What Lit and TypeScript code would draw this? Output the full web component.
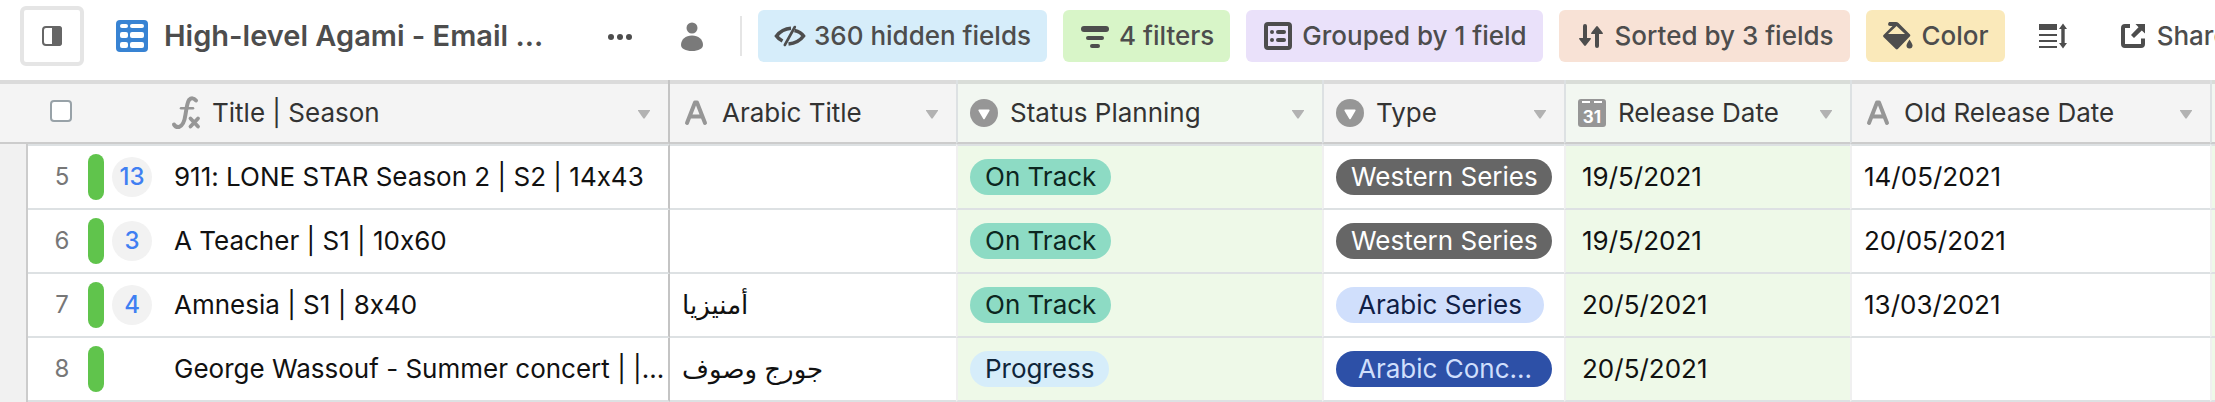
import { LitElement, html, css, svg, nothing, TemplateResult } from "lit";
import { customElement, property } from "lit/decorators.js";
import { classMap } from "lit/directives/class-map.js";

const icons: Record<string, TemplateResult> = {
  sidebar: svg`<rect x="7" y="7" width="18" height="18" rx="3" fill="#fff" stroke="currentColor" stroke-width="2"/><path d="M16 6h7a3 3 0 0 1 3 3v14a3 3 0 0 1-3 3h-7z" fill="currentColor"/>`,
  grid: svg`<rect width="32" height="32" rx="4" fill="#3883d3"/><g fill="#fff"><rect x="4" y="4" width="8" height="4" rx="2"/><rect x="14" y="4" width="14" height="4" rx="2"/><rect x="4" y="12" width="8" height="6" rx="2"/><rect x="14" y="12" width="14" height="6" rx="2"/><rect x="4" y="22" width="8" height="6" rx="2"/><rect x="14" y="22" width="14" height="6" rx="2"/></g>`,
  dots: svg`<g fill="currentColor"><circle cx="7" cy="17" r="3"/><circle cx="16" cy="17" r="3"/><circle cx="25" cy="17" r="3"/></g>`,
  person: svg`<g fill="#7a7a7a"><circle cx="16" cy="8" r="5.5"/><path d="M16 15.500c6.500 0 11 4 11 9.500 0 3.500-4.500 6-11 6s-11-2.500-11-6c0-5.500 4.500-9.500 11-9.500z"/></g>`,
  hide: svg`<g fill="none" stroke="currentColor" stroke-width="3.600"><path d="M17 8.300Q8 9 2.500 16Q4.500 19 8.500 21"/><path d="M20.500 10.500Q27 12 29.500 16Q24.500 23 14.500 24"/><path d="M20.800 7L10.800 25" stroke-width="2.600" stroke-linecap="round"/></g>`,
  filter: svg`<g fill="currentColor"><rect x="2" y="6" width="28" height="6" rx="3"/><rect x="7" y="16" width="18" height="4" rx="2"/><rect x="11" y="24" width="10" height="4" rx="2"/></g>`,
  group: svg`<rect x="4" y="4" width="24" height="24" rx="2" fill="none" stroke="currentColor" stroke-width="4"/><g fill="currentColor"><circle cx="10" cy="12" r="2"/><rect x="14" y="10" width="10" height="4" rx="2"/><circle cx="10" cy="20" r="2"/><rect x="14" y="18" width="10" height="4" rx="2"/></g>`,
  sort: svg`<g fill="currentColor"><path d="M8 6a2 2 0 0 1 4 0v12h3.500q1 .5 0 1.500L10.800 25.500q-.8.8-1.600 0L4.500 19.500q-1-1 0-1.500H8z"/><path d="M20 26a2 2 0 0 0 4 0V14h3.500q1-.5 0-1.500L22.800 6.500q-.8-.8-1.600 0L16.500 12.500q-1 1 0 1.500H20z"/></g>`,
  paint: svg`<path d="M7 2h7q1.500 0 2.500 1L28 14.500q.8.900 0 1.700L15.800 29q-1 .8-2 0L1.500 17q-1-1 0-2L10.500 6H8Q6 6 6 4zM13 7.500L6 14h17l-8.500-8z" fill="currentColor" fill-rule="evenodd"/><path d="M27.500 19.500q3 4.500 3 6a3 3 0 0 1-6 0q0-1.500 3-6z" fill="currentColor"/>`,
  rowHeight: svg`<g fill="currentColor"><rect x="2" y="4" width="18" height="6"/><rect x="2" y="14" width="18" height="2"/><rect x="2" y="20" width="18" height="2"/><rect x="2" y="26" width="18" height="2"/><path d="M26 3.500L30 9h-2.300v14H30l-4 5.500L22 23h2.300V9H22z"/></g>`,
  share: svg`<path d="M13 6H8a2 2 0 0 0-2 2v16a2 2 0 0 0 2 2h16a2 2 0 0 0 2-2v-5.500" fill="none" stroke="currentColor" stroke-width="4"/><path d="M18.500 4H28v9.500L24.800 10.500 17 18l-3-3 7.500-7.800z" fill="currentColor"/>`,
  formula: svg`<g fill="none" stroke="currentColor" stroke-linecap="round"><path d="M26 3.500Q22.500-.5 19 3Q17.300 5.200 15.500 17.500Q14 28.500 9 30Q5.500 30.500 4 27.500" stroke-width="4" /><path d="M11 11.200h12" stroke-width="2.500"/><path d="M20.500 21.500l7.500 8M28 21.500l-7.500 8" stroke-width="3.800"/></g>`,
  text: svg`<path d="M7 26L15 5.500h2L25 26M10.500 19.500h11" fill="none" stroke="currentColor" stroke-width="4" stroke-linecap="round" stroke-linejoin="round"/>`,
  select: svg`<circle cx="16" cy="16" r="14" fill="currentColor"/><path d="M11 12.500h10q1 .2.500 1.200l-4.700 8q-.8 1-1.600 0l-4.700-8q-.5-1 .5-1.200z" fill="#fff"/>`,
  date: svg`<rect x="2" y="2" width="28" height="28" rx="3" fill="currentColor"/><path d="M6 5h8M18 5h8" stroke="#fff" stroke-width="2"/><text x="16" y="26" text-anchor="middle" font-size="17" font-weight="700" fill="#fff">31</text>`,
};

const icon = (name: string) =>
  html`<svg class="icon" viewBox="0 0 32 32" aria-hidden="true">${icons[name]}</svg>`;

const iconStyles = css`
  .icon { display: block; flex: none; width: 32px; height: 32px; overflow: visible; }
`;

@customElement("view-toolbar")
class ViewToolbar extends LitElement {
  static styles = [iconStyles, css`
    :host { display: block; overflow: hidden; }
    .bar {
      display: flex; align-items: center; box-sizing: border-box;
      height: 80px; padding: 0 0 8px 20px; white-space: nowrap; background: #fff;
    }
    button {
      display: flex; align-items: center; flex: none; margin: 0; padding: 0;
      border: 0; background: none; color: #4d4d4d; font: inherit; cursor: pointer;
    }
    .toggle {
      justify-content: center; box-sizing: border-box; width: 64px; height: 60px;
      border: 4px solid #e5e5e5; border-radius: 6px; color: #666;
    }
    .view { width: 440px; margin: 0 48px 0 32px; gap: 16px; font-size: 29px; font-weight: 600; }
    .person { margin: 0 32px 0 40px; }
    .divider { flex: none; width: 2px; height: 40px; background: #e5e5e5; }
    .actions { display: flex; gap: 16px; margin-left: 16px; }
    .action { gap: 8px; height: 52px; padding: 0 16px; border-radius: 6px; font-size: 26px; font-weight: 500; }
    .blue { background: #d6edfa; }
    .green { background: #d8f5c8; }
    .purple { background: #eae1fa; }
    .orange { background: #f8e2d6; }
    .yellow { background: #fae9ba; }
  `];

  private actions = [
    { icon: "hide", label: "360 hidden fields", tone: "blue" },
    { icon: "filter", label: "4 filters", tone: "green" },
    { icon: "group", label: "Grouped by 1 field", tone: "purple" },
    { icon: "sort", label: "Sorted by 3 fields", tone: "orange" },
    { icon: "paint", label: "Color", tone: "yellow" },
    { icon: "rowHeight", label: "", tone: "plain" },
    { icon: "share", label: "Share view", tone: "plain" },
  ];

  render() {
    return html`<div class="bar">
      <button class="toggle" aria-label="Toggle sidebar">${icon("sidebar")}</button>
      <button class="view">${icon("grid")}<span>High-level Agami - Email ...</span></button>
      <button aria-label="View options">${icon("dots")}</button>
      <button class="person" aria-label="Collaborators">${icon("person")}</button>
      <div class="divider"></div>
      <div class="actions">
        ${this.actions.map((a) => html`
          <button class=${`action ${a.tone}`} aria-label=${a.label || "Row height"}>
            ${icon(a.icon)}${a.label ? html`<span>${a.label}</span>` : nothing}
          </button>`)}
      </div>
    </div>`;
  }
}

interface Row {
  n: number;
  badge?: number;
  title: string;
  arabic: string;
  status: string;
  type: string;
  release: string;
  old: string;
}

const rows: Row[] = [
  { n: 5, badge: 13, title: "911: LONE STAR Season 2 | S2 | 14x43", arabic: "", status: "On Track", type: "Western Series", release: "19/5/2021", old: "14/05/2021" },
  { n: 6, badge: 3, title: "A Teacher | S1 | 10x60", arabic: "", status: "On Track", type: "Western Series", release: "19/5/2021", old: "20/05/2021" },
  { n: 7, badge: 4, title: "Amnesia | S1 | 8x40", arabic: "أمنيزيا", status: "On Track", type: "Arabic Series", release: "20/5/2021", old: "13/03/2021" },
  { n: 8, title: "George Wassouf - Summer concert | |...", arabic: "جورج وصوف", status: "Progress", type: "Arabic Conc...", release: "20/5/2021", old: "" },
];

const columns = [
  { label: "Title | Season", icon: "formula", cls: "primary" },
  { label: "Arabic Title", icon: "text", cls: "" },
  { label: "Status Planning", icon: "select", cls: "line tint" },
  { label: "Type", icon: "select", cls: "line" },
  { label: "Release Date", icon: "date", cls: "line tint" },
  { label: "Old Release Date", icon: "text", cls: "line" },
];

const tones: Record<string, string> = {
  "On Track": "teal",
  "Progress": "sky",
  "Western Series": "grey",
  "Arabic Series": "pale",
  "Arabic Conc...": "navy",
};

@customElement("record-grid")
class RecordGrid extends LitElement {
  @property({ attribute: false }) rows: Row[] = [];

  static styles = [iconStyles, css`
    :host { display: block; overflow: hidden; }
    table {
      width: 100%; table-layout: fixed;
      border-collapse: separate; border-spacing: 0; color: #111;
    }
    .c-gutter { width: 28px; }
    .c-row { width: 132px; }
    .c-title { width: 510px; }
    .c-arabic { width: 286px; }
    .c-status { width: 366px; }
    .c-type { width: 242px; }
    .c-release { width: 286px; }
    .c-old { width: 360px; }
    th, td { box-sizing: border-box; padding: 0; text-align: left; white-space: nowrap; overflow: hidden; }
    th {
      height: 64px; padding: 4px 18px 0 10px; background: #f4f4f4; color: #333;
      font-weight: 400; border-bottom: 2px solid #ccc;
      box-shadow: inset 0 4px rgba(0, 0, 0, 0.1);
    }
    th.tint { background: #f2f7f1; }
    th.line { border-left: 2px solid #dde1e3; }
    th.select { padding: 4px 0 0 50px; }
    th.sliver { padding: 0; }
    .head { display: flex; align-items: center; gap: 10px; }
    .head .icon { color: #969696; }
    .caret {
      flex: none; margin: 2px 0 0 auto; width: 12px; height: 9px; padding: 0; border: 0;
      background: #b2b2b2; clip-path: polygon(0 0, 100% 0, 100% 15%, 55% 100%, 45% 100%, 0 15%);
    }
    .check {
      display: block; appearance: none; box-sizing: border-box; width: 22px; height: 22px; margin: 0 0 4px;
      border: 2px solid #98a2a8; border-radius: 4px; background: #fff;
    }
    td { height: 64px; padding: 0 12px; background: #fff; border-bottom: 2px solid #dde1e3; }
    tbody tr:first-child td { height: 66px; border-top: 2px solid #dde1e3; }
    td.line { border-left: 2px solid #f0f0f0; }
    td.tint { background: #eef9e8; }
    .primary { border-right: 2px solid #c4c4c4; }
    td.primary { padding: 0 0 0 14px; }
    td.gutter, tbody tr:first-child td.gutter {
      padding: 0; background: #f1f1f1; border-width: 0 2px 0 0; border-style: solid; border-color: #ccc;
    }
    td.row { padding: 0 0 0 20px; }
    td.release { padding-left: 16px; }
    td.sliver { padding: 0; }
    .meta { display: flex; align-items: center; font-size: 24px; }
    .num { width: 28px; margin-right: 12px; text-align: center; color: #777; }
    .bar { width: 16px; height: 46px; margin-right: 8px; border-radius: 8px; background: #60c44c; }
    .count {
      width: 40px; line-height: 40px; border-radius: 20px; text-align: center;
      background: #f2f2f2; color: #3f7ff2; font-weight: 500;
    }
    .pill {
      display: block; box-sizing: border-box; width: fit-content; max-width: 216px; height: 36px;
      padding: 0 15px; border-radius: 18px; line-height: 36px; overflow: hidden;
    }
    .teal { background: #8ddbc4; color: #0c2620; }
    .sky { background: #d6edfa; color: #10263a; }
    .grey { background: #666; color: #fff; }
    .pale { background: #d0dffc; color: #102046; padding: 0 22px; }
    .navy { background: #2d50a7; color: #d0dffc; padding: 0 22px; }
    .arabic { direction: rtl; unicode-bidi: isolate; }
  `];

  private pill(value: string) {
    return html`<span class=${`pill ${tones[value]}`}>${value}</span>`;
  }

  render() {
    return html`<table>
      <colgroup>
        <col class="c-gutter"><col class="c-row"><col class="c-title"><col class="c-arabic">
        <col class="c-status"><col class="c-type"><col class="c-release"><col class="c-old"><col>
      </colgroup>
      <thead><tr>
        <th class="select" colspan="2"><input class="check" type="checkbox" aria-label="Select all records"></th>
        ${columns.map((c) => html`<th class=${c.cls} scope="col"><div class="head">
          ${icon(c.icon)}<span>${c.label}</span>
          <button class="caret" aria-label=${`${c.label} menu`}></button>
        </div></th>`)}
        <th class="line tint sliver"></th>
      </tr></thead>
      <tbody>
        ${this.rows.map((r) => html`<tr>
          <td class="gutter"></td>
          <td class="row"><div class="meta">
            <span class="num">${r.n}</span><span class="bar"></span>
            <span class=${classMap({ count: r.badge !== undefined })}>${r.badge ?? nothing}</span>
          </div></td>
          <td class="primary">${r.title}</td>
          <td><span class="arabic" lang="ar">${r.arabic}</span></td>
          <td class="line tint">${this.pill(r.status)}</td>
          <td class="line">${this.pill(r.type)}</td>
          <td class="line tint release">${r.release}</td>
          <td class="line">${r.old}</td>
          <td class="line tint sliver"></td>
        </tr>`)}
      </tbody>
    </table>`;
  }
}

@customElement("app-root")
class AppRoot extends LitElement {
  static styles = css`
    :host {
      display: block; overflow: hidden; background: #fff;
      font-family: Inter, "Noto Sans", "DejaVu Sans", sans-serif; font-size: 26px; line-height: 32px;
      font-feature-settings: "calt" 0;
    }
  `;
  render() {
    return html`<view-toolbar></view-toolbar><record-grid .rows=${rows}></record-grid>`;
  }
}
